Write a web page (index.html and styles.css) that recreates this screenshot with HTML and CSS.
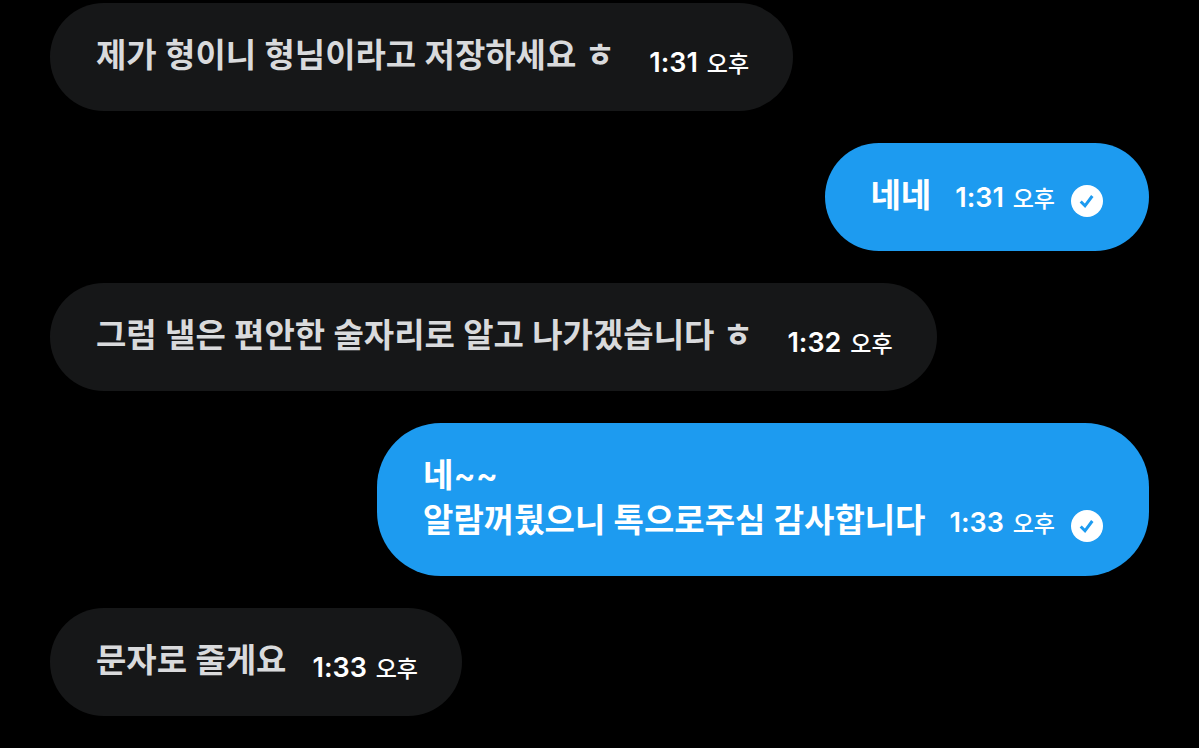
FILE: index.html
```html
<!DOCTYPE html>
<html lang="ko">
<head>
<meta charset="utf-8">
<meta name="viewport" content="width=device-width, initial-scale=1">
<title>대화</title>
<link rel="stylesheet" href="styles.css">
</head>
<body>
<main class="chat">
  <article class="bubble received">
    <p class="message">제가 형이니 형님이라고 저장하세요 ㅎ&nbsp;</p>
    <time class="time" datetime="13:31">1:31 <span class="meridiem">오후</span></time>
  </article>
  <article class="bubble sent">
    <p class="message">네네</p>
    <time class="time" datetime="13:31">1:31 <span class="meridiem">오후</span></time>
    <svg class="check" viewBox="0 0 32 32" role="img" aria-label="전송됨"><circle cx="16" cy="16" r="16"/><path d="M9.700 16.500l4.300 4.300 7.300-9.800"/></svg>
  </article>
  <article class="bubble received">
    <p class="message">그럼 낼은 편안한 술자리로 알고 나가겠습니다 ㅎ&nbsp;</p>
    <time class="time" datetime="13:32">1:32 <span class="meridiem">오후</span></time>
  </article>
  <article class="bubble sent">
    <p class="message">네~~<br>알람꺼뒀으니 톡으로주심 감사합니다</p>
    <time class="time" datetime="13:33">1:33 <span class="meridiem">오후</span></time>
    <svg class="check" viewBox="0 0 32 32" role="img" aria-label="전송됨"><circle cx="16" cy="16" r="16"/><path d="M9.700 16.500l4.300 4.300 7.300-9.800"/></svg>
  </article>
  <article class="bubble received">
    <p class="message">문자로 줄게요</p>
    <time class="time" datetime="13:33">1:33 <span class="meridiem">오후</span></time>
  </article>
</main>
</body>
</html>
```
FILE: styles.css
```css
* { box-sizing: border-box; }
body {
  margin: 0;
  background: #000;
  font-family: Inter, "Noto Sans CJK KR", sans-serif;
}
.chat {
  display: flex;
  flex-direction: column;
  gap: 32px;
  padding: 3px 50px 32px;
}
.bubble {
  display: flex;
  align-items: flex-end;
  padding: 30px 46px 33px;
  border-radius: 64px;
}
.received {
  align-self: flex-start;
  padding-right: 44px;
  background: #161718;
  color: #d9dadc;
}
.sent {
  align-self: flex-end;
  background: #1d9bf0;
  color: #fff;
}
.message {
  margin: 0;
  font-size: 33px;
  font-weight: 600;
  line-height: 45px;
}
.time {
  margin-left: 26px;
  color: #fff;
  font-size: 27px;
  font-weight: 600;
  line-height: 28px;
  white-space: nowrap;
}
.sent .time {
  margin-left: 24px;
  line-height: 38px;
}
.meridiem {
  margin-left: 2px;
  font-size: 23px;
  font-weight: 500;
}
.check {
  width: 32px;
  height: 32px;
  margin: 0 0 1px 16px;
}
.check circle { fill: #fff; }
.check path {
  fill: none;
  stroke: #1d9bf0;
  stroke-width: 3;
}
```
